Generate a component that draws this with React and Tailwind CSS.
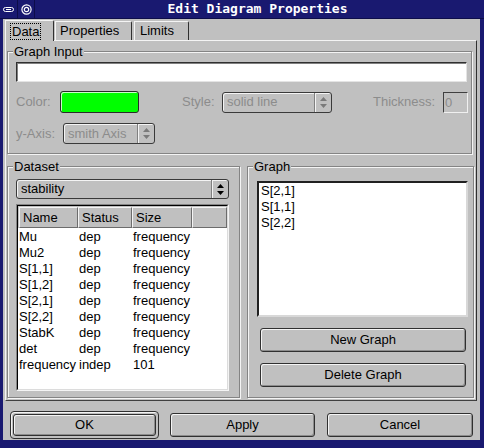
import React from "react";

const rows = [
  ["Mu", "dep", "frequency"],
  ["Mu2", "dep", "frequency"],
  ["S[1,1]", "dep", "frequency"],
  ["S[1,2]", "dep", "frequency"],
  ["S[2,1]", "dep", "frequency"],
  ["S[2,2]", "dep", "frequency"],
  ["StabK", "dep", "frequency"],
  ["det", "dep", "frequency"],
  ["frequency", "indep", "101"],
];

function Arrows({ dim }) {
  const c = dim ? "#7a7a7a" : "#000";
  return (
    <svg width="7" height="11" viewBox="0 0 7 11">
      <path d="M3.5 0 L7 4 L0 4 Z" fill={c} />
      <path d="M0 7 L7 7 L3.5 11 Z" fill={c} />
    </svg>
  );
}

function Combo({ className, text, dim }) {
  return (
    <div className={`flex rounded-[3px] border border-[#3a3a3a] shadow-[inset_1px_1px_0_#f4f4f4] ${className}`}>
      <div className={`flex-1 flex items-center pl-[4px] ${dim ? "text-[#8c8c8c]" : "text-black"}`}>{text}</div>
      <div className="w-[17px] flex items-center justify-center border-l border-[#808080] shadow-[inset_1px_0_0_#f4f4f4]">
        <Arrows dim={dim} />
      </div>
    </div>
  );
}

function Btn({ className, children }) {
  return (
    <div className={`flex items-center justify-center rounded-[3px] border border-[#303030] bg-[#c0c0c0] shadow-[inset_1px_1px_0_#f4f4f4,inset_-1px_-1px_0_#8c8c8c] ${className}`}>
      {children}
    </div>
  );
}

function Group({ label, className, children }) {
  return (
    <fieldset className={`border border-[#848484] shadow-[inset_1px_1px_0_#f4f4f4,1px_1px_0_#f4f4f4] ${className}`}>
      <legend className="ml-[5px] px-[1px] leading-[15px] bg-[#c0c0c0]">{label}</legend>
      {children}
    </fieldset>
  );
}

export default function App() {
  return (
    <div className="w-[484px] h-[448px] bg-[#191970] flex flex-col font-['Liberation_Sans',Arial,sans-serif] text-[13px] text-black">
      {/* title bar */}
      <div className="h-[19px] flex border-b border-[#0d0d4a] text-white">
        <div className="w-[18px] border-r border-[#0d0d4a] flex items-center justify-center">
          <svg width="11" height="5" viewBox="0 0 11 5">
            <rect x="0.5" y="0.5" width="10" height="4" rx="2" fill="none" stroke="#fff" />
            <rect x="4" y="1" width="3" height="3" fill="#191970" />
            <path d="M3 2.5 H8" stroke="#fff" />
          </svg>
        </div>
        <div className="w-[17px] border-r border-[#0d0d4a] flex items-center justify-center">
          <svg width="11" height="11" viewBox="0 0 11 11">
            <circle cx="5.5" cy="5.5" r="4.6" fill="none" stroke="#fff" strokeWidth="1.2" />
            <circle cx="5.5" cy="5.5" r="2.2" fill="none" stroke="#fff" strokeWidth="1.2" />
          </svg>
        </div>
        <div className="flex-1 flex items-center justify-center pr-[4px] font-['DejaVu_Sans_Mono',monospace] font-bold text-[13px]">
          Edit Diagram Properties
        </div>
      </div>

      {/* body */}
      <div className="ml-[3px] w-[477px] h-[421px] bg-[#c0c0c0] flex flex-col pl-[2px]">
        {/* tabs */}
        <div className="mt-[1px] h-[20px] flex items-end">
          <div className="relative z-10 -mb-[1px] h-[21px] w-[49px] bg-[#c0c0c0] border-l border-t border-r border-l-[#f4f4f4] border-t-[#f4f4f4] border-r-[#303030] rounded-tr-[2px] pl-[4px] flex items-center">
            <span className="border border-dotted border-black px-[1px] leading-[15px]">Data</span>
          </div>
          <div className="ml-[1px] h-[19px] w-[77px] border-l border-t border-r border-l-[#f4f4f4] border-t-[#f4f4f4] border-r-[#303030] rounded-tr-[2px] pl-[4px] flex items-center">
            Properties
          </div>
          <div className="ml-[2px] h-[19px] w-[55px] border-l border-t border-r border-l-[#f4f4f4] border-t-[#f4f4f4] border-r-[#303030] rounded-tr-[2px] pl-[5px] flex items-center">
            Limits
          </div>
        </div>

        {/* panel */}
        <div className="w-[472px] h-[361px] border border-t-[#f4f4f4] border-l-[#f4f4f4] border-r-[#303030] border-b-[#404040] flex flex-col pl-[1px]">
          <Group label="Graph Input" className="mt-[3px] w-[465px] h-[110px]">
            <div className="ml-[8px] mt-[3px] w-[451px] h-[20px] bg-white border border-t-[#303030] border-l-[#303030] border-r-[#e4e4e4] border-b-[#e4e4e4] shadow-[inset_1px_1px_0_#808080]" />
            <div className="ml-[8px] mt-[9px] h-[22px] flex items-center text-[#8c8c8c]">
              <span className="w-[44px]">Color:</span>
              <div className="w-[79px] h-[22px] rounded-[3px] border border-[#2a2a2a] bg-[#00ff00] shadow-[inset_1px_1px_0_#c8ffc8]" />
              <span className="ml-[43px] w-[40px]">Style:</span>
              <Combo className="w-[110px] h-[21px]" text="solid line" dim />
              <span className="ml-[41px] w-[70px]">Thickness:</span>
              <div className="w-[25px] h-[21px] border border-t-[#404040] border-l-[#404040] border-r-[#f0f0f0] border-b-[#f0f0f0] pl-[1px] leading-[19px]">0</div>
            </div>
            <div className="ml-[8px] mt-[10px] h-[21px] flex items-center text-[#8c8c8c]">
              <span className="w-[47px]">y-Axis:</span>
              <Combo className="w-[92px] h-[21px]" text="smith Axis" dim />
            </div>
          </Group>

          <div className="mt-[5px] flex gap-[7px]">
            <Group label="Dataset" className="w-[233px] h-[239px]">
              <Combo className="ml-[8px] mt-[5px] w-[213px] h-[20px]" text="stability" />
              <div className="ml-[8px] mt-[5px] w-[213px] h-[187px] border border-t-[#848484] border-l-[#848484] border-r-[#f4f4f4] border-b-[#f4f4f4]">
                <div className="w-full h-full bg-white border border-t-black border-l-black border-r-[#dcdcdc] border-b-[#dcdcdc] flex flex-col">
                  <div className="h-[22px] flex bg-[#c0c0c0] pl-[1px] pt-[1px]">
                    {[
                      ["Name", "w-[59px]"],
                      ["Status", "w-[54px]"],
                      ["Size", "w-[60px]"],
                      ["", "flex-1"],
                    ].map(([h, w], i) => (
                      <div
                        key={i}
                        className={`${w} h-full flex items-center pl-[3px] border border-t-[#f4f4f4] border-l-[#f4f4f4] border-r-[#6c6c6c] border-b-[#6c6c6c]`}
                      >
                        {h}
                      </div>
                    ))}
                  </div>
                  <div className="flex flex-col pt-[1px]">
                    {rows.map(([a, b, c]) => (
                      <div key={a} className="h-[16px] flex items-center leading-[16px]">
                        <span className="w-[61px] pl-[1px] whitespace-nowrap">{a}</span>
                        <span className="w-[54px]">{b}</span>
                        <span>{c}</span>
                      </div>
                    ))}
                  </div>
                </div>
              </div>
            </Group>

            <Group label="Graph" className="w-[227px] h-[239px]">
              <div className="ml-[9px] mt-[7px] w-[211px] h-[136px] bg-white border-2 border-t-[#202020] border-l-[#202020] border-r-[#d8d8d8] border-b-[#d8d8d8] pl-[2px]">
                <div className="leading-[16px]">S[2,1]</div>
                <div className="leading-[16px]">S[1,1]</div>
                <div className="leading-[16px]">S[2,2]</div>
              </div>
              <Btn className="ml-[12px] mt-[11px] w-[206px] h-[24px]">New Graph</Btn>
              <Btn className="ml-[12px] mt-[11px] w-[206px] h-[24px]">Delete Graph</Btn>
            </Group>
          </div>
        </div>

        {/* bottom buttons */}
        <div className="mt-[10px] flex items-center">
          <div className="ml-[5px] w-[149px] h-[28px] rounded-[4px] border border-[#303030] shadow-[inset_1px_1px_0_#f4f4f4] p-[2px]">
            <Btn className="w-full h-full">OK</Btn>
          </div>
          <Btn className="ml-[11px] w-[145px] h-[24px]">Apply</Btn>
          <Btn className="ml-[12px] w-[146px] h-[24px]">Cancel</Btn>
        </div>
      </div>
    </div>
  );
}
